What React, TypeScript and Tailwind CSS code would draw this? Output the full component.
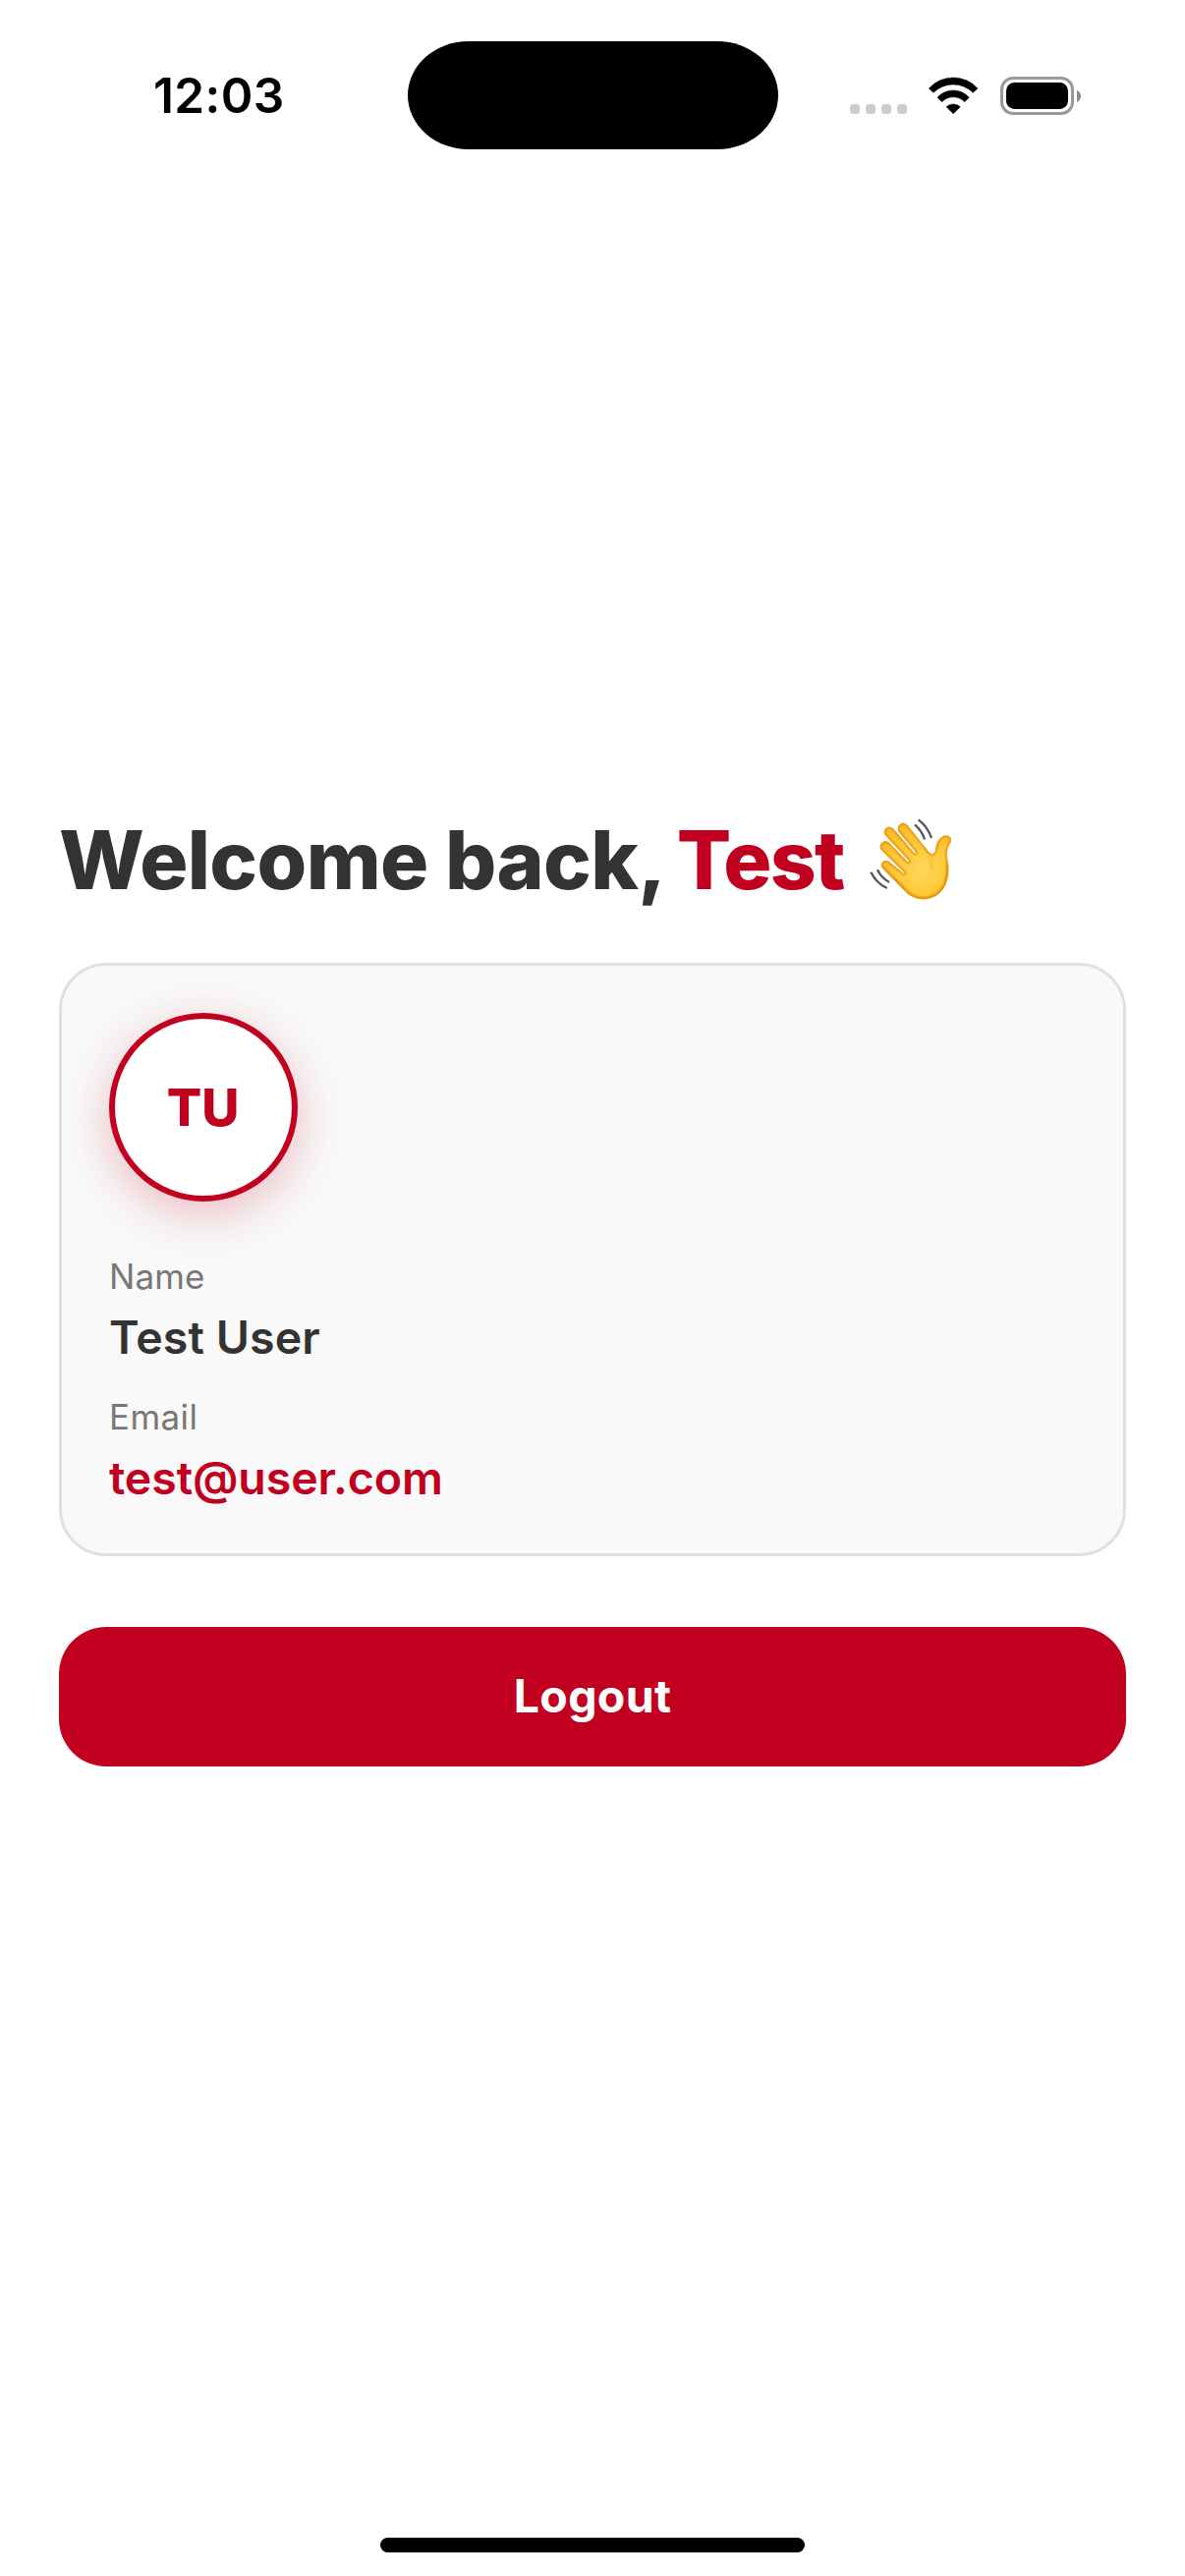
import React from 'react';

function WifiIcon() {
  return (
    <svg className="h-[39px] w-[52px]" viewBox="0 0 156 117" aria-hidden="true">
      <path d="M4 36A100.6 100.6 0 0 1 153 36L139 49A85.7 85.7 0 0 0 18 49Z" stroke="#000" strokeWidth="1.5" strokeLinejoin="round" />
      <path d="M30 64A64 64 0 0 1 127 64L113 77A48 48 0 0 0 44 77Z" stroke="#000" strokeWidth="1.5" strokeLinejoin="round" />
      <path d="M57 92A32 32 0 0 1 100 92L78.5 113Z" stroke="#000" strokeWidth="1.5" strokeLinejoin="round" />
    </svg>
  );
}

function Battery() {
  return (
    <div className="flex items-center">
      <div className="flex h-[39px] w-[75px] items-center justify-center rounded-[13px] border-[3px] border-[#999999]">
        <div className="h-[27px] w-[63px] rounded-[8.5px] bg-black" />
      </div>
      <svg className="ml-[3px] h-3 w-1" viewBox="0 0 4 12" aria-hidden="true">
        <path d="M0 0C2.6 1.2 4 3.3 4 6S2.6 10.8 0 12Z" fill="#8c8c8c" />
      </svg>
    </div>
  );
}

function StatusBar() {
  return (
    <header className="flex h-[194px] items-center">
      <div className="ml-[156px] w-[258.5px] pt-[2px] text-[49.5px] leading-none font-semibold tracking-[0.4px] text-black">12:03</div>
      <div className="h-[110.5px] w-[377px] rounded-[62px_/_55px] bg-black" />
      <div className="mt-7 ml-[73.5px] flex gap-1.5">
        {[0, 1, 2, 3].map((i) => (
          <span key={i} className="size-2.5 rounded-[3.5px] bg-[#cccccc]" />
        ))}
      </div>
      <div className="mt-px ml-[21px]">
        <WifiIcon />
      </div>
      <div className="mt-px ml-[22px]">
        <Battery />
      </div>
    </header>
  );
}

function WavingHand() {
  const hand =
    'M84 190C76 176 88 164 103 171L149 208Q155 209 151 203L82 136C70 122 86 102 103 113L161 172Q168 176 166 168L94 91C82 76 100 58 116 70L182 146Q189 150 187 142L135 80C125 64 144 44 160 60L225 142Q240 156 247 138C248 112 262 91 279 92C297 94 296 108 287 120C279 136 279 152 284 176C290 222 274 266 236 280C206 291 180 283 160 267Z';
  return (
    <svg className="-my-[5px] ml-[11px] h-[110px] w-[120px] shrink-0" viewBox="0 0 360 330" role="img" aria-label="Waving hand" fill="none">
      <defs>
        <radialGradient id="skin" gradientUnits="userSpaceOnUse" cx="205" cy="195" r="135">
          <stop offset="0" stopColor="#ffd75c" />
          <stop offset="0.5" stopColor="#fecb3c" />
          <stop offset="1" stopColor="#fcc02a" />
        </radialGradient>
        <filter id="soft" x="-20%" y="-20%" width="140%" height="140%">
          <feGaussianBlur stdDeviation="3.5" />
        </filter>
        <clipPath id="outline">
          <path d={hand} />
        </clipPath>
      </defs>
      <path d={hand} fill="url(#skin)" stroke="#f2ae24" strokeWidth="3" strokeLinejoin="round" />
      <g clipPath="url(#outline)">
        <path d={hand} stroke="#e29414" strokeWidth="8" filter="url(#soft)" />
        <path d="M284 176C290 222 274 266 236 280C206 291 180 283 160 267L84 190" stroke="#e3930f" strokeWidth="11" filter="url(#soft)" />
        <path d="M234 148C229 170 232 184 240 196" stroke="#f0ac22" strokeWidth="6" opacity="0.55" filter="url(#soft)" />
      </g>
      <g stroke="#57585a" strokeWidth="7">
        <path d="M183 58Q205 77 213 103" />
        <path d="M194 43Q223 65 234 99" />
        <path d="M69 196Q81 221 105 234" />
        <path d="M49 203Q66 237 98 252" />
      </g>
    </svg>
  );
}

export default function App() {
  return (
    <div className="flex h-[2622px] w-[1206px] flex-col bg-white font-['Inter',sans-serif]">
      <StatusBar />
      <main className="mt-[631px] flex flex-col px-[60px]">
        <h1 className="flex h-[100px] items-center text-[82px] leading-[100px] font-extrabold tracking-[-0.63px] whitespace-pre text-[#333333]">
          <span className="pt-0.5">Welcome back, </span>
          <span className="-ml-[2.5px] pt-0.5 tracking-[-1.7px] text-[#c1001f]">Test</span>
          <WavingHand />
        </h1>

        <section className="mt-[55px] rounded-[48px] border-[3px] border-[#e0e0e0] bg-[#f9f9f9] p-12">
          <div className="flex size-48 items-center justify-center rounded-full border-[6px] border-[#c1001f] bg-white pr-px text-[52.5px] font-extrabold text-[#c1001f] shadow-[0_12px_48px_rgba(193,0,31,0.25)]">
            TU
          </div>
          <div className="mt-[55px] text-[35px] leading-[42px] tracking-[0.1px] text-[#777777]">Name</div>
          <div className="mt-3 text-[46.5px] leading-[58px] font-semibold tracking-[0.1px] text-[#333333]">Test User</div>
          <div className="mt-[31px] text-[35px] leading-[42px] tracking-[0.4px] text-[#777777]">Email</div>
          <div className="mt-3 text-[46.5px] leading-[58px] font-semibold tracking-[-0.1px] text-[#c1001f]">test@user.com</div>
        </section>

        <button className="mt-[72px] h-[142px] rounded-[48px] bg-[#c1001f] text-[46.5px] font-bold tracking-[0.3px] text-white">Logout</button>
      </main>
      <div className="mt-auto mb-6 h-[15px] w-[432px] self-center rounded-full bg-black" />
    </div>
  );
}
